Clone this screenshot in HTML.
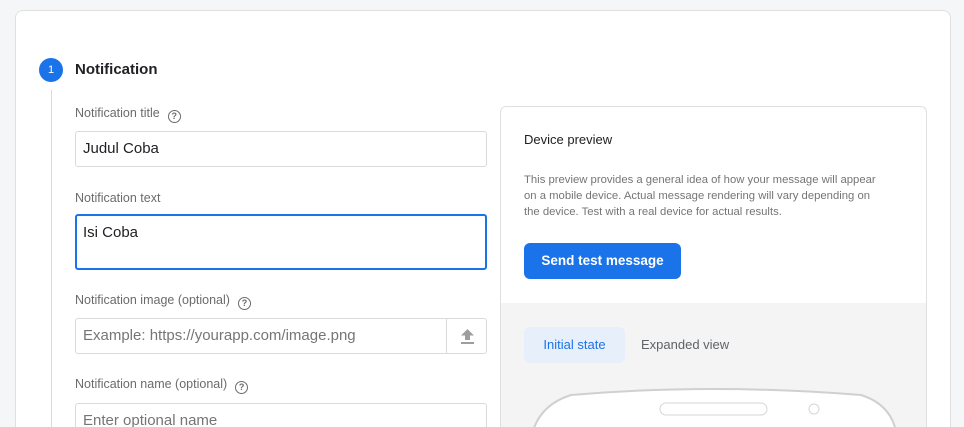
<!DOCTYPE html>
<html><head><meta charset="utf-8"><style>
*{box-sizing:border-box;margin:0;padding:0}
html,body{width:964px;height:427px;overflow:hidden}
body{background:#f5f6f7;font-family:"Liberation Sans",Roboto,sans-serif;position:relative}
.card{position:absolute;left:15px;top:10px;width:936px;height:417px;background:#fff;border:1px solid #e0e0e0;border-bottom:none;border-radius:8px 8px 0 0}
.a{position:absolute}
.lbl{font-size:12.5px;color:#6b6b6b}
.q{display:inline-block;width:13px;height:13px;border:1.3px solid #6b6b6b;border-radius:50%;font-size:9px;text-align:center;line-height:11px;color:#6b6b6b;margin-left:8px;vertical-align:-2px;font-weight:bold}
.in{position:absolute;border:1px solid #dadada;border-radius:3px;background:#fff;font-size:15px;color:#202124;padding:0 7px;overflow:hidden}
</style></head><body>
<div class="card"></div>
<div class="a" style="left:39px;top:58px;width:24px;height:24px;border-radius:50%;background:#1a73e8;color:#fff;font-size:11px;text-align:center;line-height:24px">1</div>
<div class="a" style="left:75px;top:61px;font-size:15px;font-weight:bold;color:#202124">Notification</div>
<div class="a" style="left:51px;top:90px;width:1px;height:337px;background:#dadada"></div>

<div class="a lbl" style="left:75px;top:106px">Notification title<span class="q">?</span></div>
<div class="in" style="left:75px;top:131px;width:412px;height:36px;line-height:34px">Judul Coba</div>

<div class="a lbl" style="left:75px;top:191px">Notification text</div>
<div class="in" style="left:75px;top:214px;width:412px;height:56px;border:2px solid #1a73e8;padding:7px 6px;line-height:20px">Isi Coba</div>

<div class="a lbl" style="left:75px;top:293px">Notification image (optional)<span class="q">?</span></div>
<div class="in" style="left:75px;top:318px;width:372px;height:36px;line-height:34px;color:#757575;border-radius:3px 0 0 3px">Example: https://yourapp.com/image.png</div>
<div class="in" style="left:446px;top:318px;width:41px;height:36px;border-radius:0 3px 3px 0">
<svg width="41" height="34" style="position:absolute;left:0;top:0"><path d="M20.5 10 L14 16.5 H18 V21 H23 V16.5 H27 Z" fill="#9e9e9e"/><rect x="14" y="23" width="13" height="2" fill="#9e9e9e"/></svg></div>

<div class="a lbl" style="left:75px;top:377px">Notification name (optional)<span class="q">?</span></div>
<div class="in" style="left:75px;top:403px;width:412px;height:24px;line-height:34px;color:#757575;border-bottom:none;border-radius:3px 3px 0 0">Enter optional name</div>

<div class="a" style="left:500px;top:106px;width:427px;height:321px;border:1px solid #e0e0e0;border-bottom:none;border-radius:6px 6px 0 0;overflow:hidden;background:#fff">
 <div class="a" style="left:0;top:196px;width:427px;height:125px;background:#f4f4f4"></div>
 <div class="a" style="left:23px;top:25px;font-size:13px;color:#202124">Device preview</div>
 <div class="a" style="left:23px;top:65px;white-space:nowrap;font-size:11.3px;line-height:16px;color:#757575">This preview provides a general idea of how your message will appear<br>on a mobile device. Actual message rendering will vary depending on<br>the device. Test with a real device for actual results.</div>
 <div class="a" style="left:23px;top:136px;width:157px;height:36px;background:#1a73e8;border-radius:6px;color:#fff;font-size:13.5px;font-weight:bold;text-align:center;line-height:36px">Send test message</div>
 <div class="a" style="left:23px;top:220px;width:101px;height:36px;background:#e7effb;border-radius:6px;color:#1a73e8;font-size:13px;text-align:center;line-height:36px">Initial state</div>
 <div class="a" style="left:140px;top:220px;font-size:13px;color:#5f6368;line-height:36px">Expanded view</div>
 <svg class="a" style="left:0;top:270px" width="427" height="51"><path d="M29 60 L29 70 Q32 30 70 18 Q210 6 360 18 Q392 28 396 60 Z" fill="#fff" stroke="#d0d0d0" stroke-width="2"/><rect x="159" y="26" width="107" height="12" rx="6" fill="#fff" stroke="#d6d6d6"/><circle cx="313" cy="32" r="5" fill="#fff" stroke="#d6d6d6"/></svg>
</div>
</body></html>
